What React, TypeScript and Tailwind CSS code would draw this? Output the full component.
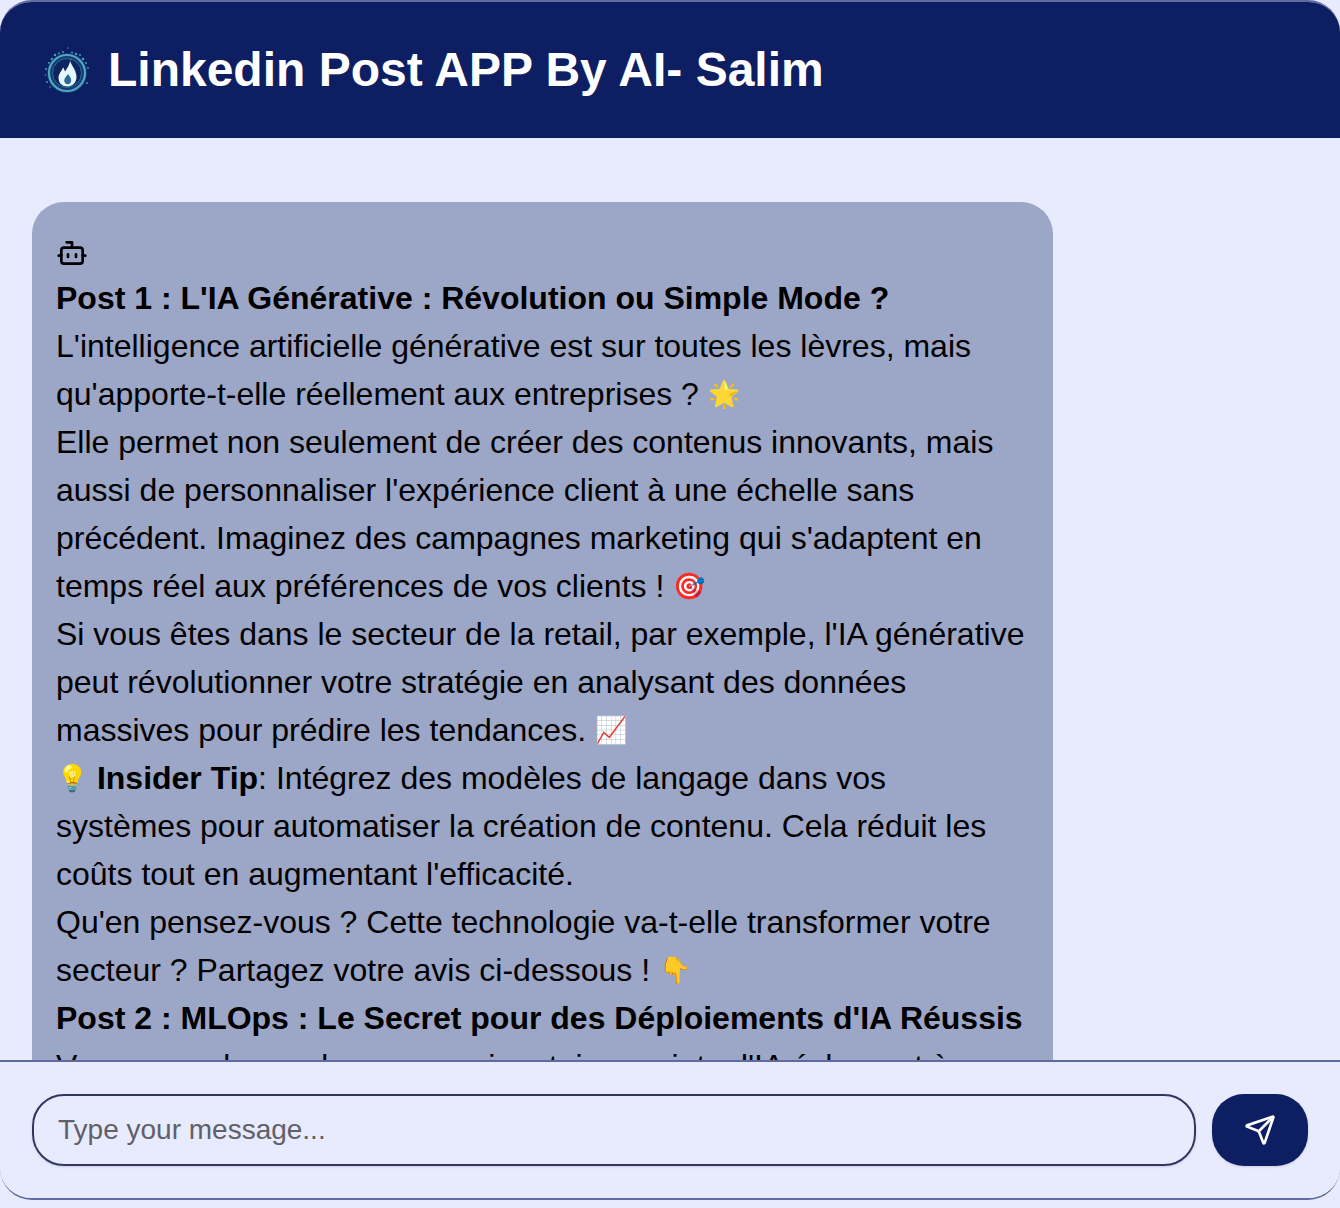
import { Bot, Send } from 'lucide-react'

function Logo() {
  const dots = [
    [5, 17, 1.1], [8, 13, 1.3], [11, 9, 1.2], [15, 7.500, 1], [19, 6, 0.9], [28, 6.500, 1], [32, 8, 1.2], [36, 9, 1], [39, 13, 1.2], [42, 17, 1],
    [44, 22, 0.9], [2, 23, 1], [1.500, 29, 0.8], [3, 36, 0.9], [6, 41, 0.8], [43, 37, 0.9], [24, 2, 0.7], [9, 17, 0.8], [37, 16, 0.8], [13, 11, 0.7], [33, 12, 0.7],
  ]
  return (
    <svg width="48" height="48" viewBox="0 0 48 48" className="shrink-0">
      <defs>
        <filter id="soft">
          <feGaussianBlur stdDeviation="0.5" />
        </filter>
      </defs>
      <g filter="url(#soft)">
        {dots.map(([cx, cy, r], i) => (
          <circle key={i} cx={cx} cy={cy} r={r} fill="#46a0bb" />
        ))}
        <circle cx="23" cy="27" r="20" fill="#163b72" />
        <circle cx="23" cy="27" r="18" fill="none" stroke="#4da8c2" strokeWidth="2.2" />
        <circle cx="23" cy="27" r="14.500" fill="#0f2660" stroke="#2a6d9a" strokeWidth="1" />
        <path d="M26 13c-.5 5 6.500 10 6.500 18 0 5.500-4 9.500-9 9.500s-9-3.500-9-8.500c0-4.500 3-6.500 4.500-10.500 1 1 1.500 2.500 2 4 2.500-3.500 5-7.500 5.500-12.500z" fill="#e6f7fb" />
        <path d="M24 28c1.500 2 3.200 3.800 3.200 6.500 0 2.300-1.600 3.700-3.500 3.700s-3.500-1.400-3.500-3.700 2.400-4 3.800-6.500z" fill="#2c6a96" />
      </g>
    </svg>
  )
}

function Emoji({ children }: { children: string }) {
  return <span className="text-[26px] leading-none align-[2px]">{children}</span>
}

export default function App() {
  return (
    <div className="font-['Liberation_Sans',Arial,sans-serif] h-[1208px] bg-[#e8ebfd] text-black">
      <div className="flex flex-col h-[1200px] overflow-hidden rounded-[32px] border-y-2 border-[#5f6ba0]">
        <header className="flex items-center gap-4 h-[136px] shrink-0 bg-[#0e1e62] px-[44px] text-white">
          <Logo />
          <h1 className="text-[48px] leading-[56px] font-bold">Linkedin Post APP By AI- Salim</h1>
        </header>
        <main className="flex-1 min-h-0 overflow-hidden px-8 pt-16">
          <div className="w-[1021px] rounded-[32px] bg-[#9ca6c6] p-6 text-[32px] leading-[48px]">
            <Bot size={32} strokeWidth={2} className="block mt-[11px] mb-[5px]" />
            <p><strong>Post 1 : L'IA Générative : Révolution ou Simple Mode ?</strong></p>
            <p>L'intelligence artificielle générative est sur toutes les lèvres, mais qu'apporte-t-elle réellement aux entreprises ? <Emoji>🌟</Emoji></p>
            <p>Elle permet non seulement de créer des contenus innovants, mais aussi de personnaliser l'expérience client à une échelle sans précédent. Imaginez des campagnes marketing qui s'adaptent en temps réel aux préférences de vos clients ! <Emoji>🎯</Emoji></p>
            <p>Si vous êtes dans le secteur de la retail, par exemple, l'IA générative peut révolutionner votre stratégie en analysant des données massives pour prédire les tendances. <Emoji>📈</Emoji></p>
            <p><Emoji>💡</Emoji> <strong>Insider Tip</strong>: Intégrez des modèles de langage dans vos systèmes pour automatiser la création de contenu. Cela réduit les coûts tout en augmentant l'efficacité.</p>
            <p>Qu'en pensez-vous ? Cette technologie va-t-elle transformer votre secteur ? Partagez votre avis ci-dessous ! <Emoji>👇</Emoji></p>
            <p><strong>Post 2 : MLOps : Le Secret pour des Déploiements d'IA Réussis</strong></p>
            <p>Vous vous demandez pourquoi certains projets d'IA échouent à</p>
          </div>
        </main>
        <footer className="flex items-center gap-4 h-[138px] shrink-0 border-t-2 border-[#5f6ba0] bg-[#e8ebfd] px-8">
          <input
            placeholder="Type your message..."
            className="flex-1 h-[72px] rounded-[32px] border-2 border-[#2f3760] bg-transparent px-6 text-[28px] placeholder:text-[#5f6068] outline-none shadow-sm"
          />
          <button className="flex items-center justify-center w-24 h-[72px] rounded-[32px] bg-[#0e1e62] text-white shadow-sm">
            <Send size={32} strokeWidth={2} />
          </button>
        </footer>
      </div>
    </div>
  )
}
